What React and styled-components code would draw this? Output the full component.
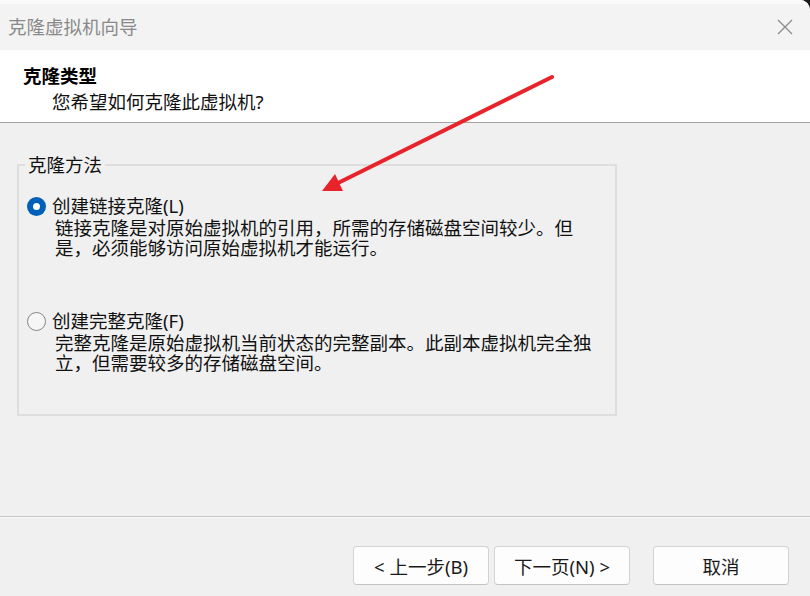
import React from 'react';
import styled, { createGlobalStyle } from 'styled-components';

const FONT = `"Noto Sans", "Noto Sans CJK SC", sans-serif`;

const Global = createGlobalStyle`
  html, body { margin: 0; padding: 0; background: #1a1a1a; }
  body { font-family: ${FONT}; }
  * { box-sizing: border-box; }
`;

const Window = styled.div`
  position: relative;
  width: 810px;
  height: 596px;
  display: flex;
  flex-direction: column;
  background: #f0f0f0;
  overflow: hidden;
  border-top-right-radius: 10px;
  color: #111;
  font-size: 18.5px;
`;

const TitleBar = styled.div`
  height: 50px;
  border-top: 4px solid #fafafa;
  background: #f3f3f3;
  display: flex;
  align-items: center;
  justify-content: space-between;
  padding: 0 17px 0 8px;
`;

const TitleText = styled.span`
  color: #8a8a8a;
  font-size: 18.5px;
  line-height: 24px;
`;

const CloseButton = styled.button`
  border: none;
  background: none;
  padding: 0;
  width: 16px;
  height: 16px;
  display: flex;
  cursor: default;
`;

const Header = styled.div`
  height: 73px;
  background: #ffffff;
  border-bottom: 1px solid #a3a3a3;
  padding: 14px 0 0 23px;
`;

const HeaderTitle = styled.div`
  font-weight: 700;
  line-height: 24px;
  color: #000;
`;

const HeaderSub = styled.div`
  margin-top: 2px;
  padding-left: 29px;
  line-height: 24px;
  color: #111;
`;

const Body = styled.div`
  flex: 1;
  padding-top: 31px;
`;

const Group = styled.fieldset`
  margin: 0 0 0 17px;
  width: 600px;
  border: 2px solid #dedede;
  padding: 19px 0 41px 8px;
`;

const Legend = styled.legend`
  margin-left: -2px;
  padding: 0 3px;
  line-height: 22px;
  color: #111;
`;

const Option = styled.div`
  margin-top: ${p => p.$first ? 0 : 52}px;
`;

const OptionRow = styled.label`
  display: flex;
  align-items: center;
  gap: 6px;
  line-height: 22px;
  height: 22px;
`;

const Radio = styled.span`
  position: relative;
  width: 19px;
  height: 19px;
  border-radius: 50%;
  flex: none;
  background: ${p => p.$checked ? '#005fb8' : '#f6f6f6'};
  border: ${p => p.$checked ? 'none' : '1px solid #858585'};
  ${p => p.$checked && `
    &::after {
      content: '';
      position: absolute;
      left: 6px;
      top: 6px;
      width: 7px;
      height: 7px;
      border-radius: 50%;
      background: #fff;
    }
  `}
`;

const Desc = styled.div`
  margin-top: 1px;
  padding-left: 28px;
  line-height: 20px;
  color: #111;
`;

const Footer = styled.div`
  height: 80px;
  border-top: 1px solid #c6c6c6;
  box-shadow: inset 0 1px 0 #fbfbfb;
  display: flex;
  justify-content: flex-end;
  align-items: flex-start;
  padding: 29px 21px 0 0;
`;

const Button = styled.button`
  width: 136px;
  height: 39px;
  margin-left: ${p => p.$gap || 0}px;
  border: 1px solid #d3d3d3;
  border-bottom-color: #c4c4c4;
  border-radius: 4px;
  background: #fdfdfd;
  font-family: ${FONT};
  font-size: 18.5px;
  color: #1a1a1a;
  padding: 0;
  cursor: default;
`;

const ArrowLayer = styled.svg`
  position: absolute;
  left: 0;
  top: 0;
  pointer-events: none;
`;

export default function App() {
  return (
    <>
      <Global />
      <Window>
        <TitleBar>
          <TitleText>克隆虚拟机向导</TitleText>
          <CloseButton aria-label="关闭">
            <svg width="16" height="16" viewBox="0 0 16 16">
              <path d="M1 1 L15 15 M15 1 L1 15" stroke="#8a8a8a" strokeWidth="1.3" fill="none" />
            </svg>
          </CloseButton>
        </TitleBar>
        <Header>
          <HeaderTitle>克隆类型</HeaderTitle>
          <HeaderSub>您希望如何克隆此虚拟机?</HeaderSub>
        </Header>
        <Body>
          <Group>
            <Legend>克隆方法</Legend>
            <Option $first>
              <OptionRow>
                <Radio $checked />
                <span>创建链接克隆(L)</span>
              </OptionRow>
              <Desc>
                链接克隆是对原始虚拟机的引用，所需的存储磁盘空间较少。但<br />
                是，必须能够访问原始虚拟机才能运行。
              </Desc>
            </Option>
            <Option>
              <OptionRow>
                <Radio />
                <span>创建完整克隆(F)</span>
              </OptionRow>
              <Desc>
                完整克隆是原始虚拟机当前状态的完整副本。此副本虚拟机完全独<br />
                立，但需要较多的存储磁盘空间。
              </Desc>
            </Option>
          </Group>
        </Body>
        <Footer>
          <Button>&lt; 上一步(B)</Button>
          <Button $gap={5}>下一页(N) &gt;</Button>
          <Button $gap={23}>取消</Button>
        </Footer>
        <ArrowLayer width="810" height="596" viewBox="0 0 810 596">
          <line x1="552" y1="77" x2="336" y2="184" stroke="#e8232b" strokeWidth="4" strokeLinecap="round" />
          <polygon points="322,191 335,174 343,191" fill="#e8232b" />
        </ArrowLayer>
      </Window>
    </>
  );
}
